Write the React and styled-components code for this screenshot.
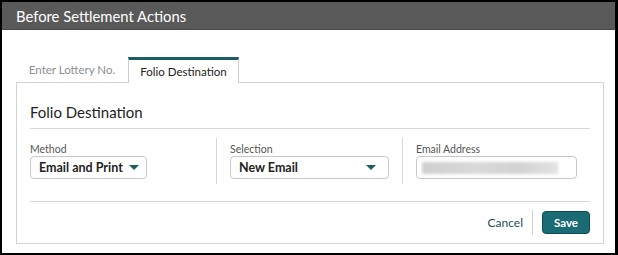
import React from 'react';
import styled, { createGlobalStyle } from 'styled-components';

const GlobalStyle = createGlobalStyle`
    body {
        margin: 0;
        font-family: Lato, "Open Sans", sans-serif;
        background: #000;
    }
`;

const Dialog = styled.div`
    width: 618px;
    height: 255px;
    box-sizing: border-box;
    border: 2px solid #000;
    border-right-width: 3px;
    background: #fff;
    display: flex;
    flex-direction: column;
`;

const Header = styled.div`
    height: 28px;
    background: #595959;
    border-bottom: 1px solid #4a4a4a;
    box-sizing: border-box;
    display: flex;
    align-items: center;
    padding-left: 14px;
    color: #fff;
    font-size: 14.8px;
`;

const Body = styled.div`
    padding: 27px 11px 0 14px;
`;

const Tabs = styled.div`
    display: flex;
    height: 26px;
    position: relative;
    z-index: 1;
    margin-bottom: -1px;
`;

const Tab = styled.div`
    box-sizing: border-box;
    width: ${p => p.w}px;
    display: flex;
    align-items: center;
    justify-content: center;
    font-size: 11.5px;
    color: ${p => (p.active ? '#222' : '#8a8f94')};
    background: ${p => (p.active ? '#fff' : 'transparent')};
    border: ${p => (p.active ? '1px solid #ccc' : 'none')};
    border-top: ${p => (p.active ? '3px solid #1b5e66' : 'none')};
    border-bottom: none;
    padding-bottom: ${p => (p.active ? '0' : '2px')};
`;

const Panel = styled.div`
    box-sizing: border-box;
    height: 162px;
    border: 1px solid #d4d4d4;
    padding: 0 13px;
`;

const Title = styled.div`
    height: 46px;
    box-sizing: border-box;
    border-bottom: 1px solid #d6d6d6;
    display: flex;
    align-items: center;
    padding-top: 12px;
    font-size: 15px;
    color: #222;
`;

const Fields = styled.div`
    display: flex;
    height: 73px;
    box-sizing: border-box;
    border-bottom: 1px solid #d6d6d6;
    padding-top: 9px;
`;

const Field = styled.div`
    width: ${p => p.w}px;
    box-sizing: border-box;
    padding-left: ${p => p.pl || 0}px;
    border-right: ${p => (p.divider ? '1px solid #d6d6d6' : 'none')};
    height: 46px;
    display: flex;
    flex-direction: column;
`;

const Label = styled.div`
    font-size: 10.5px;
    color: #555;
    line-height: 14px;
    margin-top: 4px;
    height: 14px;
`;

const Select = styled.div`
    width: ${p => p.w}px;
    height: 23px;
    box-sizing: border-box;
    border: 1px solid #c8c8c8;
    border-radius: 4px;
    display: flex;
    align-items: center;
    justify-content: space-between;
    gap: 6px;
    padding: 0 ${p => p.pr}px 0 8px;
    font-size: 12.5px;
    font-weight: 700;
    color: #222;
    white-space: nowrap;
`;

const Caret = styled.span`
    flex: none;
    width: 0;
    height: 0;
    border-left: 5px solid transparent;
    border-right: 5px solid transparent;
    border-top: 5px solid #1b5e66;
`;

const Input = styled.div`
    width: 161px;
    height: 23px;
    box-sizing: border-box;
    border: 1px solid #c8c8c8;
    border-radius: 4px;
    display: flex;
    align-items: center;
    padding-left: 5px;
`;

const Blur = styled.div`
    width: 136px;
    height: 12px;
    background: linear-gradient(90deg, #cfcfcf, #d9d9d9 40%, #d2d2d2 70%, #e2e2e2);
    filter: blur(1.5px);
`;

const Footer = styled.div`
    height: 41px;
    display: flex;
    align-items: center;
    justify-content: flex-end;
`;

const Cancel = styled.span`
    font-size: 12px;
    color: #1b4f5a;
    padding-right: 9px;
    border-right: 1px solid #d0d0d0;
    line-height: 25px;
`;

const Save = styled.button`
    margin-left: 9px;
    width: 48px;
    height: 23px;
    border: 1px solid #0c4d55;
    border-radius: 4px;
    background: #1a6b73;
    color: #fff;
    font-family: Lato, sans-serif;
    font-size: 11.5px;
    font-weight: 700;
    padding: 0;
`;

const App = () => (
    <>
        <GlobalStyle />
        <Dialog>
            <Header>Before Settlement Actions</Header>
            <Body>
                <Tabs>
                    <Tab w={112}>Enter Lottery No.</Tab>
                    <Tab w={111} active>Folio Destination</Tab>
                </Tabs>
                <Panel>
                    <Title>Folio Destination</Title>
                    <Fields>
                        <Field w={187} divider>
                            <Label>Method</Label>
                            <Select w={117} pr={11}>Email and Print<Caret /></Select>
                        </Field>
                        <Field w={186} pl={13} divider>
                            <Label>Selection</Label>
                            <Select w={159} pr={12}>New Email<Caret /></Select>
                        </Field>
                        <Field w={180} pl={13}>
                            <Label>Email Address</Label>
                            <Input><Blur /></Input>
                        </Field>
                    </Fields>
                    <Footer>
                        <Cancel>Cancel</Cancel>
                        <Save>Save</Save>
                    </Footer>
                </Panel>
            </Body>
        </Dialog>
    </>
);

export default App;
